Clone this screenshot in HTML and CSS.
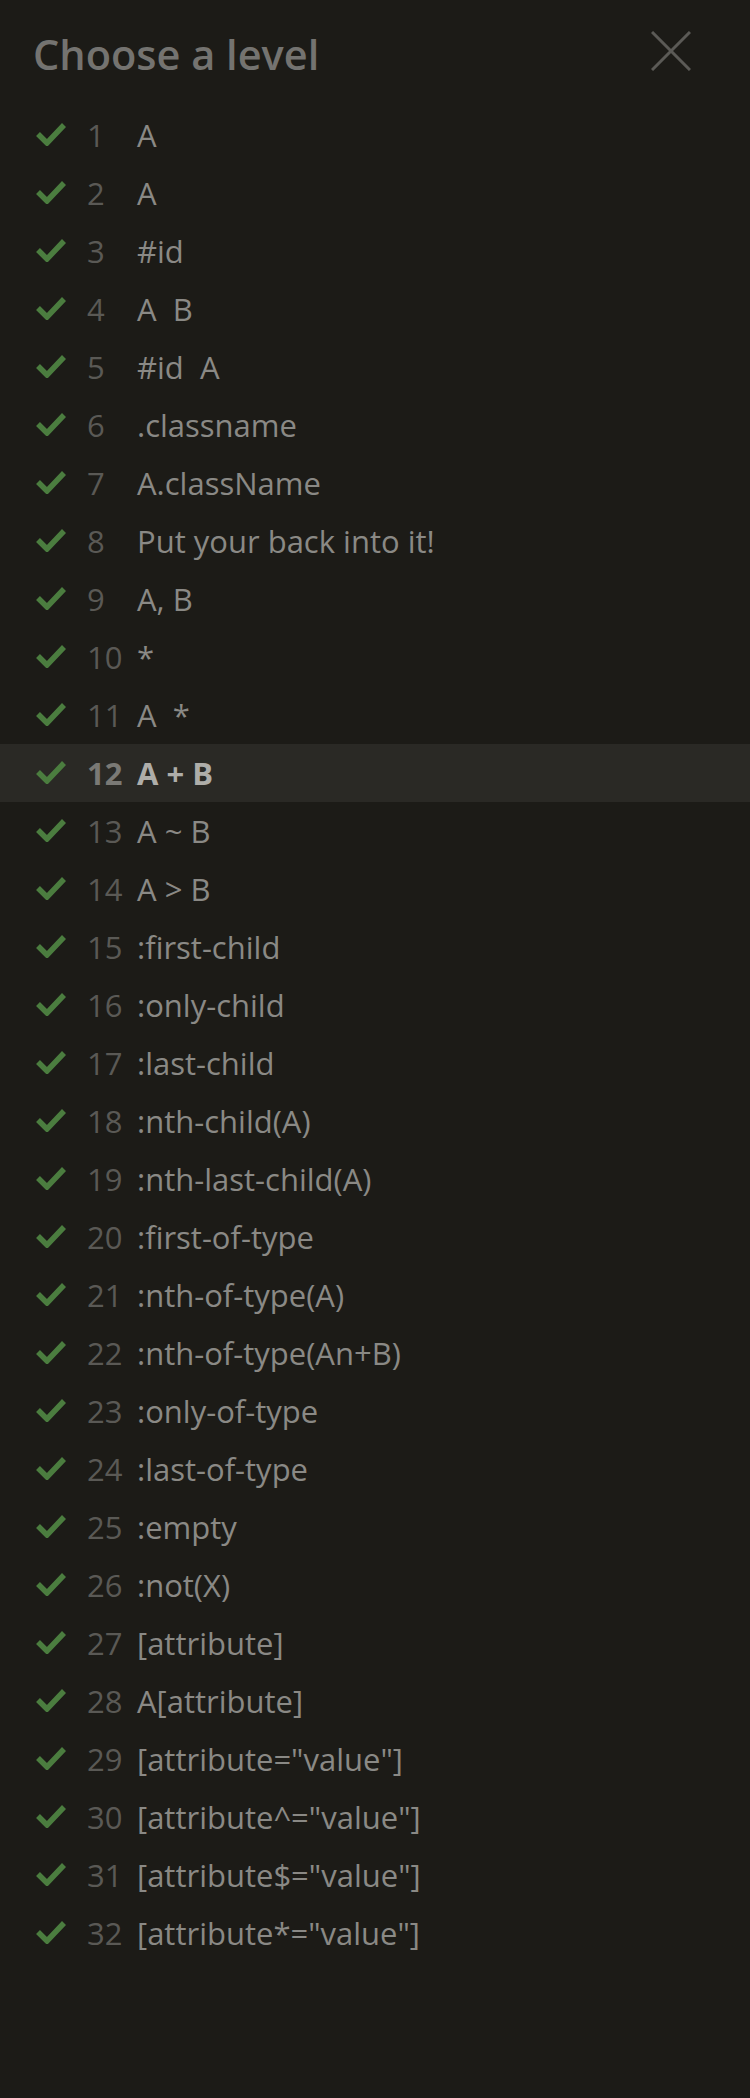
FILE: index.html
```html
<!DOCTYPE html>
<html lang="en">
<head>
<meta charset="utf-8">
<title>Choose a level</title>
<link rel="stylesheet" href="styles.css">
</head>
<body>
<div class="menu">
  <div class="header">
    <h2 class="title">Choose a level</h2>
    <button class="close" aria-label="Close">
      <svg viewBox="0 0 40 40" width="40" height="40"><path d="M1 1 L39 39 M39 1 L1 39" stroke="#5b5a56" stroke-width="3" fill="none"/></svg>
    </button>
  </div>
  <ul class="levels">
    <li class="level"><span class="check"><svg viewBox="0 0 30 24" width="30" height="24"><path d="M2 12 L11 21 L28 3" class="check-path"/></svg></span><span class="num">1</span><span class="name">A</span></li>
    <li class="level"><span class="check"><svg viewBox="0 0 30 24" width="30" height="24"><path d="M2 12 L11 21 L28 3" class="check-path"/></svg></span><span class="num">2</span><span class="name">A</span></li>
    <li class="level"><span class="check"><svg viewBox="0 0 30 24" width="30" height="24"><path d="M2 12 L11 21 L28 3" class="check-path"/></svg></span><span class="num">3</span><span class="name">#id</span></li>
    <li class="level"><span class="check"><svg viewBox="0 0 30 24" width="30" height="24"><path d="M2 12 L11 21 L28 3" class="check-path"/></svg></span><span class="num">4</span><span class="name">A  B</span></li>
    <li class="level"><span class="check"><svg viewBox="0 0 30 24" width="30" height="24"><path d="M2 12 L11 21 L28 3" class="check-path"/></svg></span><span class="num">5</span><span class="name">#id  A</span></li>
    <li class="level"><span class="check"><svg viewBox="0 0 30 24" width="30" height="24"><path d="M2 12 L11 21 L28 3" class="check-path"/></svg></span><span class="num">6</span><span class="name">.classname</span></li>
    <li class="level"><span class="check"><svg viewBox="0 0 30 24" width="30" height="24"><path d="M2 12 L11 21 L28 3" class="check-path"/></svg></span><span class="num">7</span><span class="name">A.className</span></li>
    <li class="level"><span class="check"><svg viewBox="0 0 30 24" width="30" height="24"><path d="M2 12 L11 21 L28 3" class="check-path"/></svg></span><span class="num">8</span><span class="name">Put your back into it!</span></li>
    <li class="level"><span class="check"><svg viewBox="0 0 30 24" width="30" height="24"><path d="M2 12 L11 21 L28 3" class="check-path"/></svg></span><span class="num">9</span><span class="name">A, B</span></li>
    <li class="level"><span class="check"><svg viewBox="0 0 30 24" width="30" height="24"><path d="M2 12 L11 21 L28 3" class="check-path"/></svg></span><span class="num">10</span><span class="name">*</span></li>
    <li class="level"><span class="check"><svg viewBox="0 0 30 24" width="30" height="24"><path d="M2 12 L11 21 L28 3" class="check-path"/></svg></span><span class="num">11</span><span class="name">A  *</span></li>
    <li class="level current"><span class="check"><svg viewBox="0 0 30 24" width="30" height="24"><path d="M2 12 L11 21 L28 3" class="check-path"/></svg></span><span class="num">12</span><span class="name">A + B</span></li>
    <li class="level"><span class="check"><svg viewBox="0 0 30 24" width="30" height="24"><path d="M2 12 L11 21 L28 3" class="check-path"/></svg></span><span class="num">13</span><span class="name">A ~ B</span></li>
    <li class="level"><span class="check"><svg viewBox="0 0 30 24" width="30" height="24"><path d="M2 12 L11 21 L28 3" class="check-path"/></svg></span><span class="num">14</span><span class="name">A &gt; B</span></li>
    <li class="level"><span class="check"><svg viewBox="0 0 30 24" width="30" height="24"><path d="M2 12 L11 21 L28 3" class="check-path"/></svg></span><span class="num">15</span><span class="name">:first-child</span></li>
    <li class="level"><span class="check"><svg viewBox="0 0 30 24" width="30" height="24"><path d="M2 12 L11 21 L28 3" class="check-path"/></svg></span><span class="num">16</span><span class="name">:only-child</span></li>
    <li class="level"><span class="check"><svg viewBox="0 0 30 24" width="30" height="24"><path d="M2 12 L11 21 L28 3" class="check-path"/></svg></span><span class="num">17</span><span class="name">:last-child</span></li>
    <li class="level"><span class="check"><svg viewBox="0 0 30 24" width="30" height="24"><path d="M2 12 L11 21 L28 3" class="check-path"/></svg></span><span class="num">18</span><span class="name">:nth-child(A)</span></li>
    <li class="level"><span class="check"><svg viewBox="0 0 30 24" width="30" height="24"><path d="M2 12 L11 21 L28 3" class="check-path"/></svg></span><span class="num">19</span><span class="name">:nth-last-child(A)</span></li>
    <li class="level"><span class="check"><svg viewBox="0 0 30 24" width="30" height="24"><path d="M2 12 L11 21 L28 3" class="check-path"/></svg></span><span class="num">20</span><span class="name">:first-of-type</span></li>
    <li class="level"><span class="check"><svg viewBox="0 0 30 24" width="30" height="24"><path d="M2 12 L11 21 L28 3" class="check-path"/></svg></span><span class="num">21</span><span class="name">:nth-of-type(A)</span></li>
    <li class="level"><span class="check"><svg viewBox="0 0 30 24" width="30" height="24"><path d="M2 12 L11 21 L28 3" class="check-path"/></svg></span><span class="num">22</span><span class="name">:nth-of-type(An+B)</span></li>
    <li class="level"><span class="check"><svg viewBox="0 0 30 24" width="30" height="24"><path d="M2 12 L11 21 L28 3" class="check-path"/></svg></span><span class="num">23</span><span class="name">:only-of-type</span></li>
    <li class="level"><span class="check"><svg viewBox="0 0 30 24" width="30" height="24"><path d="M2 12 L11 21 L28 3" class="check-path"/></svg></span><span class="num">24</span><span class="name">:last-of-type</span></li>
    <li class="level"><span class="check"><svg viewBox="0 0 30 24" width="30" height="24"><path d="M2 12 L11 21 L28 3" class="check-path"/></svg></span><span class="num">25</span><span class="name">:empty</span></li>
    <li class="level"><span class="check"><svg viewBox="0 0 30 24" width="30" height="24"><path d="M2 12 L11 21 L28 3" class="check-path"/></svg></span><span class="num">26</span><span class="name">:not(X)</span></li>
    <li class="level"><span class="check"><svg viewBox="0 0 30 24" width="30" height="24"><path d="M2 12 L11 21 L28 3" class="check-path"/></svg></span><span class="num">27</span><span class="name">[attribute]</span></li>
    <li class="level"><span class="check"><svg viewBox="0 0 30 24" width="30" height="24"><path d="M2 12 L11 21 L28 3" class="check-path"/></svg></span><span class="num">28</span><span class="name">A[attribute]</span></li>
    <li class="level"><span class="check"><svg viewBox="0 0 30 24" width="30" height="24"><path d="M2 12 L11 21 L28 3" class="check-path"/></svg></span><span class="num">29</span><span class="name">[attribute="value"]</span></li>
    <li class="level"><span class="check"><svg viewBox="0 0 30 24" width="30" height="24"><path d="M2 12 L11 21 L28 3" class="check-path"/></svg></span><span class="num">30</span><span class="name">[attribute^="value"]</span></li>
    <li class="level"><span class="check"><svg viewBox="0 0 30 24" width="30" height="24"><path d="M2 12 L11 21 L28 3" class="check-path"/></svg></span><span class="num">31</span><span class="name">[attribute$="value"]</span></li>
    <li class="level"><span class="check"><svg viewBox="0 0 30 24" width="30" height="24"><path d="M2 12 L11 21 L28 3" class="check-path"/></svg></span><span class="num">32</span><span class="name">[attribute*="value"]</span></li>
  </ul>
</div>
</body>
</html>
```
FILE: styles.css
```css
html, body {
  margin: 0;
  padding: 0;
  background: #1c1b17;
  min-height: 100%;
}
body {
  font-family: "Open Sans", "Noto Sans", sans-serif;
  min-height: 2098px;
}
.menu {
  padding-top: 29px;
}
.header {
  display: flex;
  justify-content: space-between;
  align-items: flex-start;
  padding: 0 59px 0 33px;
}
.title {
  margin: 0;
  font-size: 41.5px;
  line-height: 50px;
  font-weight: 600;
  color: #747370;
}
.close {
  margin: 2px 0 0 0;
  padding: 0;
  border: 0;
  background: none;
  width: 40px;
  height: 40px;
  display: block;
}
.close svg {
  display: block;
}
.levels {
  list-style: none;
  margin: 27px 0 0 0;
  padding: 0;
}
.level {
  display: flex;
  align-items: center;
  height: 58px;
  padding-left: 36px;
  font-size: 31px;
  line-height: 58px;
  white-space: pre;
}
.level.current {
  background: #2a2925;
}
.check {
  width: 30px;
  height: 24px;
  margin-right: 21px;
  display: block;
  position: relative;
  top: -1px;
}
.check svg {
  display: block;
}
.check-path {
  fill: none;
  stroke: #4b7d3f;
  stroke-width: 5.5;
  stroke-linejoin: miter;
  stroke-linecap: butt;
}
.num {
  width: 50px;
  color: #5a5955;
}
.name {
  color: #8a8985;
}
.current .num {
  color: #7a7975;
  font-weight: 700;
}
.current .name {
  color: #aeada9;
  font-weight: 700;
}
```
